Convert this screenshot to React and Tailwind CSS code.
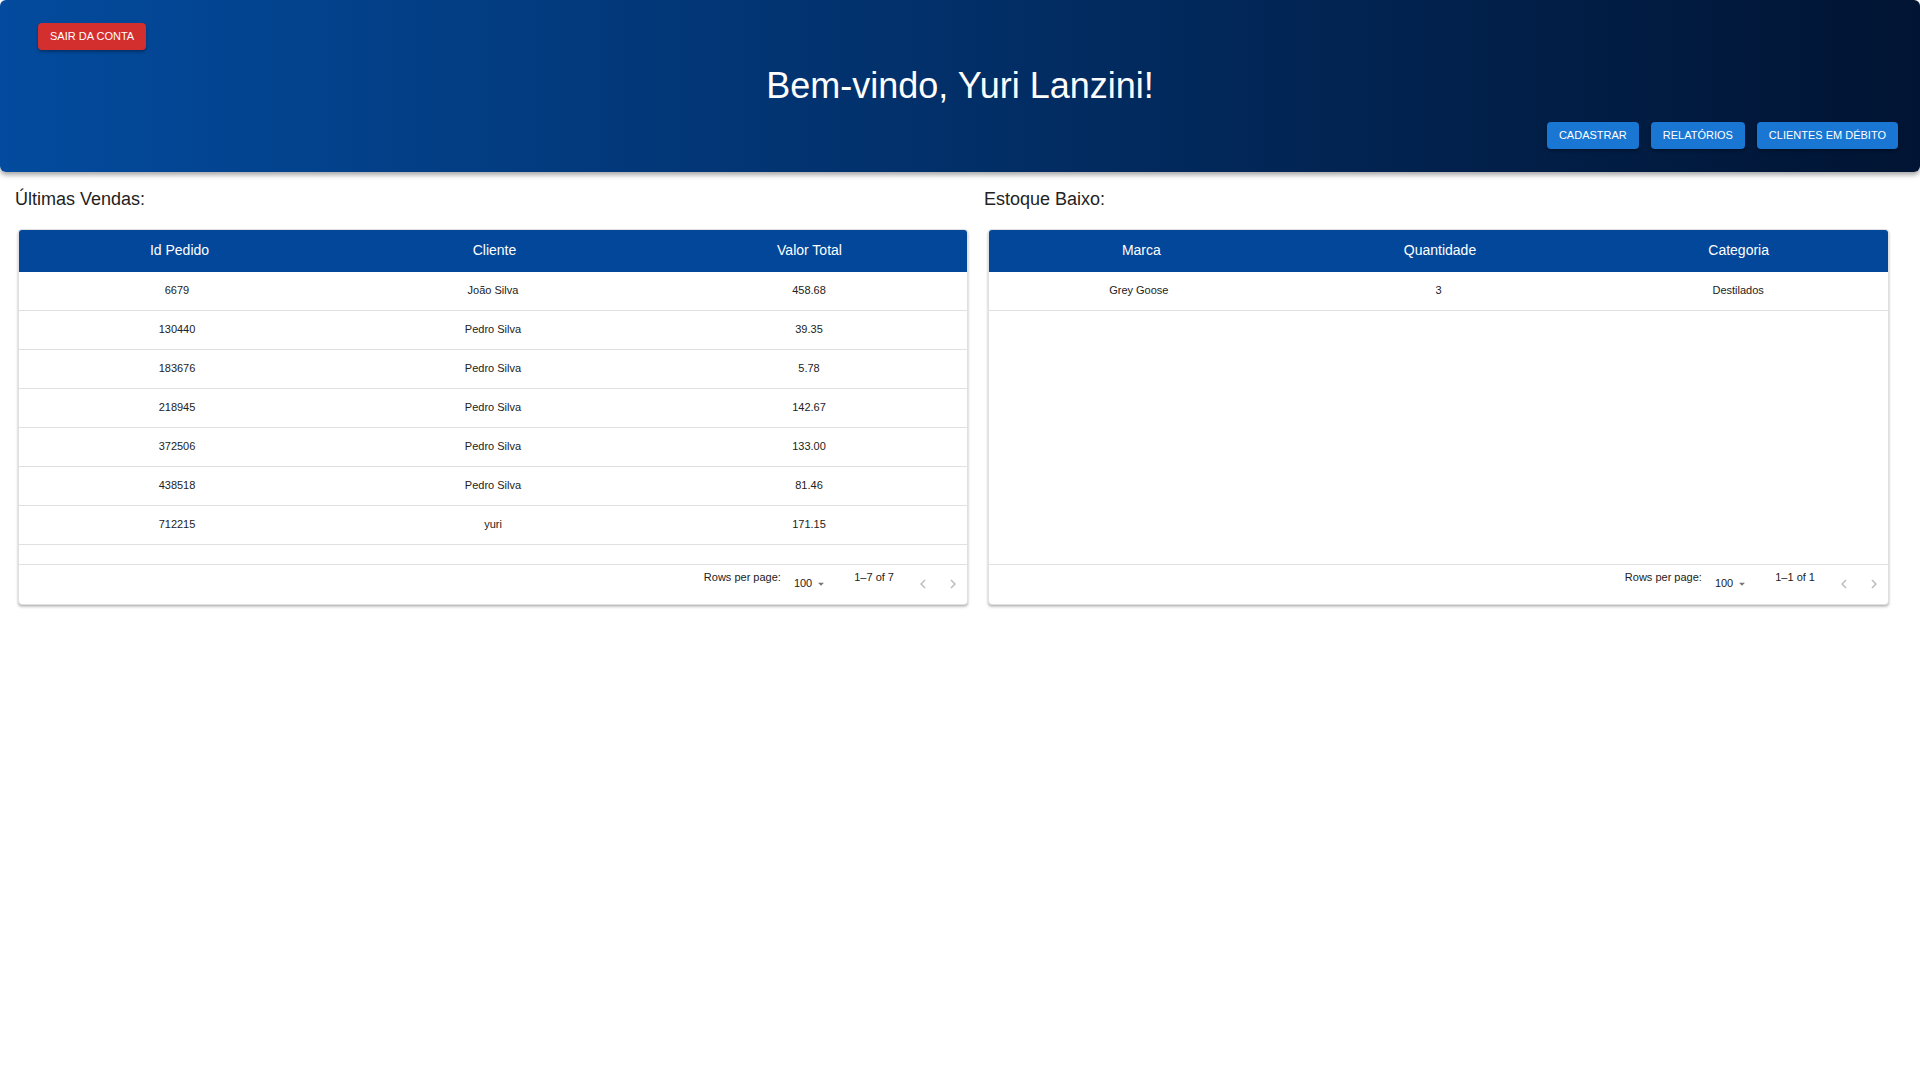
import React from "react";

const vendas = [
  { id: "6679", cliente: "João Silva", total: "458.68" },
  { id: "130440", cliente: "Pedro Silva", total: "39.35" },
  { id: "183676", cliente: "Pedro Silva", total: "5.78" },
  { id: "218945", cliente: "Pedro Silva", total: "142.67" },
  { id: "372506", cliente: "Pedro Silva", total: "133.00" },
  { id: "438518", cliente: "Pedro Silva", total: "81.46" },
  { id: "712215", cliente: "yuri", total: "171.15" },
];

const estoque = [{ marca: "Grey Goose", qtd: "3", categoria: "Destilados" }];

function Chevron({ dir }) {
  return (
    <svg width="18" height="18" viewBox="0 0 24 24" fill="#bdbdbd">
      {dir === "left" ? (
        <path d="M15.41 7.41 14 6l-6 6 6 6 1.41-1.41L10.83 12z" />
      ) : (
        <path d="M10 6 8.59 7.41 13.17 12l-4.58 4.59L10 18l6-6z" />
      )}
    </svg>
  );
}

function Footer({ label }) {
  return (
    <div className="h-[40px] border-t border-[#e0e0e0] flex items-center justify-end pr-[2px] pb-[2px] text-[11px] text-[#222]">
      <span className="mb-[12px]">Rows per page:</span>
      <span className="ml-[13px]">100</span>
      <svg className="ml-[2px]" width="14" height="14" viewBox="0 0 24 24" fill="#757575">
        <path d="m7 10 5 5 5-5z" />
      </svg>
      <span className="ml-[26px] mb-[12px]">{label}</span>
      <div className="ml-[17px] flex gap-[6px]">
        <span className="w-[24px] h-[24px] flex items-center justify-center">
          <Chevron dir="left" />
        </span>
        <span className="w-[24px] h-[24px] flex items-center justify-center">
          <Chevron dir="right" />
        </span>
      </div>
    </div>
  );
}

function Tabela({ cols, rows, label, width }) {
  return (
    <div
      className={`${width} bg-white border border-[#e0e0e0] rounded-[4px] shadow-[0_2px_3px_rgba(0,0,0,0.2),0_1px_2px_rgba(0,0,0,0.12)] overflow-hidden`}
    >
      <div className="h-[42px] bg-[#03479a] grid grid-cols-3 items-center pl-[3px] pb-[2px] text-white text-[14px]">
        {cols.map((c) => (
          <div key={c} className="text-center">{c}</div>
        ))}
      </div>
      <div className="h-[292px]">
        {rows.map((r, i) => (
          <div key={i} className="h-[39px] border-b border-[#e0e0e0] grid grid-cols-3 items-center pb-[1px] text-[11px] text-[#222]">
            {r.map((v, j) => (
              <div key={j} className="text-center">{v}</div>
            ))}
          </div>
        ))}
      </div>
      <Footer label={label} />
    </div>
  );
}

export default function App() {
  return (
    <div className="min-h-screen bg-white" style={{ fontFamily: '"Liberation Sans", Arial, sans-serif' }}>
      {/* Cabeçalho */}
      <header className="h-[172px] rounded-[6px] bg-gradient-to-r from-[#034b9e] via-[#022f68] to-[#011433] shadow-[0_3px_5px_rgba(0,0,0,0.35)] pt-[23px] flex flex-col">
        <div className="flex pl-[38px]">
          <button className="h-[27px] px-[12px] rounded-[4px] bg-[#d32f2f] text-white text-[11px] shadow-[0_2px_3px_rgba(0,0,0,0.3)]">
            SAIR DA CONTA
          </button>
        </div>
        <h1 className="mt-[15px] text-center text-white text-[36px] leading-[41px]">
          Bem-vindo, Yuri Lanzini!
        </h1>
        <div className="mt-[16px] pr-[22px] flex justify-end gap-[12px]">
          <button className="h-[27px] px-[12px] rounded-[4px] bg-[#1976d2] text-white text-[11px] shadow-[0_2px_3px_rgba(0,0,0,0.3)]">CADASTRAR</button>
          <button className="h-[27px] px-[12px] rounded-[4px] bg-[#1976d2] text-white text-[11px] shadow-[0_2px_3px_rgba(0,0,0,0.3)]">RELATÓRIOS</button>
          <button className="h-[27px] px-[12px] rounded-[4px] bg-[#1976d2] text-white text-[11px] shadow-[0_2px_3px_rgba(0,0,0,0.3)]">CLIENTES EM DÉBITO</button>
        </div>
      </header>

      <main className="flex pt-[14px]">
        <section className="w-[968px] pl-[15px]">
          <h2 className="text-[18px] leading-[27px] text-[#222]">Últimas Vendas:</h2>
          <div className="mt-[16px] ml-[3px]">
            <Tabela
              width="w-[950px]"
              cols={["Id Pedido", "Cliente", "Valor Total"]}
              rows={vendas.map((v) => [v.id, v.cliente, v.total])}
              label="1–7 of 7"
            />
          </div>
        </section>
        <section className="pl-[16px]">
          <h2 className="text-[18px] leading-[27px] text-[#222]">Estoque Baixo:</h2>
          <div className="mt-[16px] ml-[4px]">
            <Tabela
              width="w-[901px]"
              cols={["Marca", "Quantidade", "Categoria"]}
              rows={estoque.map((e) => [e.marca, e.qtd, e.categoria])}
              label="1–1 of 1"
            />
          </div>
        </section>
      </main>
    </div>
  );
}
